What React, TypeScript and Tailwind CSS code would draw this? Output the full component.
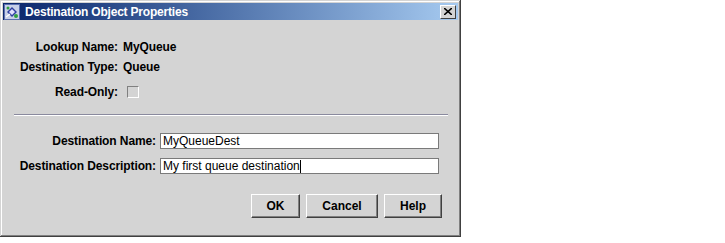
import React from 'react'

const face = { fontFamily: '"Liberation Sans", Arial, sans-serif' }

function TitleIcon() {
  return (
    <svg width="16" height="16" viewBox="0 0 16 16">
      <rect x="0" y="0" width="16" height="16" fill="#5a6fb0" />
      <rect x="1" y="1" width="14" height="14" fill="#c8d0e8" />
      <path d="M3 8 L8 3 L13 8 L8 13 Z" fill="#3040a0" />
      <path d="M5 8 L8 5 L11 8 L8 11 Z" fill="#e0e0ff" />
      <circle cx="12" cy="12" r="2" fill="#30a040" />
      <circle cx="4" cy="4" r="1.5" fill="#30a040" />
      <path d="M2 13 L6 10" stroke="#ffffff" strokeWidth="1.2" />
    </svg>
  )
}

function Button({ label, width }: { label: string; width: string }) {
  return (
    <button
      className={`${width} h-6 bg-[#d4d4d4] text-[12px] font-bold text-black border border-t-white border-l-white border-r-[#404040] border-b-[#404040] shadow-[inset_-1px_-1px_0_#808080]`}
      style={face}
    >
      {label}
    </button>
  )
}

function Field({ value, caret }: { value: string; caret?: boolean }) {
  return (
    <div className="w-[279px] h-4 bg-white border border-[#7a7a7a] flex items-center px-[2px] text-[12px] text-black leading-none whitespace-nowrap">
      <span>{value}</span>
      {caret && <span className="w-px h-[13px] bg-black" />}
    </div>
  )
}

export default function App() {
  return (
    <div className="w-[725px] h-[243px] bg-white" style={face}>
      <div className="w-[461px] h-[237px] bg-[#d4d4d4] p-[3px] shadow-[inset_-1px_-1px_0_#404040,inset_1px_1px_0_#d4d4d4,inset_-2px_-2px_0_#808080,inset_2px_2px_0_#ffffff] flex flex-col">
        <div className="h-[17px] flex items-center bg-gradient-to-r from-[#0a246a] to-[#a6caf0] pl-px pr-[2px]">
          <TitleIcon />
          <span className="ml-[5px] text-white font-bold text-[12px] tracking-[-0.2px] leading-none whitespace-nowrap">
            Destination Object Properties
          </span>
          <div className="ml-auto w-4 h-[14px] bg-[#d4d4d4] border border-t-white border-l-white border-r-[#404040] border-b-[#404040] flex items-center justify-center">
            <svg width="8" height="7" viewBox="0 0 8 7">
              <path d="M0 0 L8 7 M8 0 L0 7" stroke="#000" strokeWidth="1.6" />
            </svg>
          </div>
        </div>

        <div className="grid grid-cols-[98px_auto] gap-x-[5px] pl-[17px] mt-[17px] text-[12px] tracking-[-0.1px] font-bold text-black whitespace-nowrap">
          <div className="h-5 flex items-center justify-end">Lookup Name:</div>
          <div className="h-5 flex items-center">MyQueue</div>
          <div className="h-5 flex items-center justify-end">Destination Type:</div>
          <div className="h-5 flex items-center">Queue</div>
          <div className="h-5 mt-[5px] flex items-center justify-end">Read-Only:</div>
          <div className="h-5 mt-[5px] flex items-center pl-[4px]">
            <span className="w-3 h-3 border border-t-[#808080] border-l-[#808080] border-r-white border-b-white bg-[#d4d4d4]" />
          </div>
        </div>

        <div className="mt-[12px] ml-[11px] mr-[10px] border-t border-t-[#8a8a9e] border-b border-b-white" />

        <div className="grid grid-cols-[136px_auto] gap-x-[4px] gap-y-[9px] pl-[17px] mt-[17px] text-[12px] text-black whitespace-nowrap">
          <div className="h-4 flex items-center justify-end font-bold tracking-[-0.1px]">Destination Name:</div>
          <Field value="MyQueueDest" />
          <div className="h-4 flex items-center justify-end font-bold tracking-[-0.1px]">Destination Description:</div>
          <Field value="My first queue destination" caret />
        </div>

        <div className="mt-5 flex justify-end gap-[6px] pr-[16px]">
          <Button label="OK" width="w-[49px]" />
          <Button label="Cancel" width="w-[72px]" />
          <Button label="Help" width="w-[58px]" />
        </div>
      </div>
    </div>
  )
}
